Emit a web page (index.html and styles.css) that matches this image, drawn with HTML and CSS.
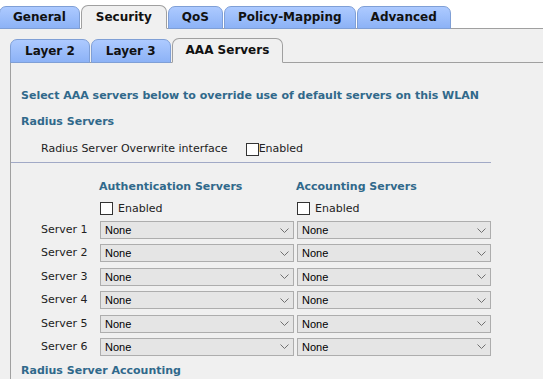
FILE: index.html
```html
<!DOCTYPE html>
<html lang="en">
<head>
  <meta charset="UTF-8">
  <title>WLAN - AAA Servers</title>
  <link rel="stylesheet" href="styles.css">
</head>
<body>
  <div class="tabbar">
    <div class="tab first">General</div>
    <div class="tab active">Security</div>
    <div class="tab">QoS</div>
    <div class="tab">Policy-Mapping</div>
    <div class="tab">Advanced</div>
  </div>
  <div class="main">
    <div class="subtabbar">
      <div class="subtab">Layer 2</div>
      <div class="subtab">Layer 3</div>
      <div class="subtab active">AAA Servers</div>
    </div>
    <div class="panel">
      <div class="intro">Select AAA servers below to override use of default servers on this WLAN</div>
      <div class="section">Radius Servers</div>
      <div class="overwrite">
        <span class="ow-label">Radius Server Overwrite interface</span>
        <input type="checkbox" class="check">
        <span>Enabled</span>
      </div>
      <div class="divider"></div>

      <div class="srv-row heads">
        <span></span>
        <span class="col-head">Authentication Servers</span>
        <span class="col-head">Accounting Servers</span>
      </div>
      <div class="srv-row checks">
        <span></span>
        <label><input type="checkbox" class="check"> Enabled</label>
        <label><input type="checkbox" class="check"> Enabled</label>
      </div>
      <div class="srv-row server">
        <span class="srv-label">Server 1</span>
        <select class="sel"><option>None</option></select>
        <select class="sel"><option>None</option></select>
      </div>
      <div class="srv-row server">
        <span class="srv-label">Server 2</span>
        <select class="sel"><option>None</option></select>
        <select class="sel"><option>None</option></select>
      </div>
      <div class="srv-row server">
        <span class="srv-label">Server 3</span>
        <select class="sel"><option>None</option></select>
        <select class="sel"><option>None</option></select>
      </div>
      <div class="srv-row server">
        <span class="srv-label">Server 4</span>
        <select class="sel"><option>None</option></select>
        <select class="sel"><option>None</option></select>
      </div>
      <div class="srv-row server">
        <span class="srv-label">Server 5</span>
        <select class="sel"><option>None</option></select>
        <select class="sel"><option>None</option></select>
      </div>
      <div class="srv-row server">
        <span class="srv-label">Server 6</span>
        <select class="sel"><option>None</option></select>
        <select class="sel"><option>None</option></select>
      </div>

      <div class="section accounting">Radius Server Accounting</div>
    </div>
  </div>
</body>
</html>
```
FILE: styles.css
```css
html, body {
  margin: 0;
  height: 100%;
}
body {
  font-family: "DejaVu Sans", Verdana, sans-serif;
  font-size: 11px;
  line-height: 14px;
  color: #222;
  background: #fff;
  display: flex;
  flex-direction: column;
  overflow: hidden;
}

/* top tabs */
.tabbar {
  display: flex;
  align-items: flex-end;
  height: 23px;
  padding-top: 5px;
  border-bottom: 1px solid #a0a0a0;
  background: #fff;
}
.tab {
  box-sizing: border-box;
  height: 23px;
  line-height: 21px;
  padding: 0 13px;
  margin-right: 1px;
  margin-bottom: -1px;
  font-size: 12px;
  font-weight: bold;
  color: #111;
  border: 1px solid #7f9fd6;
  border-radius: 7px 7px 0 0;
  background: linear-gradient(#adcaff, #8cb2f6);
}
.tab.first {
  margin-left: -1px;
}
.tab.active {
  height: 24px;
  line-height: 22px;
  padding: 0 14px;
  border-color: #a0a0a0;
  border-bottom-color: #f0f0f0;
  background: #f0f0f0;
}

.main {
  flex: 1;
  background: #f0f0f0;
  padding: 10px 0 0 10px;
  display: flex;
  flex-direction: column;
}

/* sub tabs */
.subtabbar {
  display: flex;
  align-items: flex-end;
  height: 23px;
  border-bottom: 1px solid #a0a0a0;
}
.subtab {
  box-sizing: border-box;
  height: 24px;
  line-height: 22px;
  padding: 0 14px;
  margin-right: 1px;
  margin-bottom: -1px;
  font-size: 12px;
  font-weight: bold;
  color: #111;
  border: 1px solid #7f9fd6;
  border-radius: 7px 7px 0 0;
  background: linear-gradient(#adcaff, #8cb2f6);
}
.subtab.active {
  height: 25px;
  line-height: 23px;
  padding: 0 13px;
  border-color: #a0a0a0;
  border-bottom-color: #f0f0f0;
  background: #f0f0f0;
}

.panel {
  flex: 1;
  border-left: 1px solid #a0a0a0;
  padding-left: 10px;
}
.intro, .section, .col-head {
  font-weight: bold;
  color: #30698b;
}
.intro {
  margin-top: 26px;
}
.section {
  margin-top: 12px;
}
.overwrite {
  display: flex;
  align-items: center;
  margin-top: 13px;
  padding-left: 20px;
}
.ow-label {
  margin-right: 18px;
}
.check {
  appearance: none;
  box-sizing: border-box;
  width: 13px;
  height: 13px;
  margin: 0;
  border: 1px solid #333;
  background: #fff;
  vertical-align: -2px;
}
.divider {
  width: 480px;
  margin: 6px 0 0 -10px;
  border-top: 1px solid #a1a9c6;
}

/* server grid */
.srv-row {
  display: grid;
  grid-template-columns: 76px 194px 194px;
  column-gap: 3px;
  align-items: center;
}
.heads {
  margin-top: 17px;
}
.col-head {
  margin-left: -1px;
}
.checks {
  margin-top: 8px;
}
.checks label {
  display: flex;
  align-items: center;
  gap: 5px;
}
.checks .check {
  margin-top: -2px;
}
.server {
  margin-top: 5.4px;
}
.checks + .server {
  margin-top: 5px;
}
.srv-label {
  padding-left: 20px;
}
.sel {
  appearance: none;
  box-sizing: border-box;
  width: 194px;
  height: 18px;
  margin: 0;
  padding: 0 0 0 4px;
  border: 1px solid #adadad;
  border-radius: 0;
  font-family: "Liberation Sans", Arial, sans-serif;
  font-size: 11px;
  color: #000;
  background: #e5e5e5 url("data:image/svg+xml,%3Csvg xmlns='http://www.w3.org/2000/svg' width='9' height='5'%3E%3Cpolyline points='0.5,0.5 4.5,4.5 8.5,0.5' fill='none' stroke='%23707070'/%3E%3C/svg%3E") no-repeat right 4px center;
}
.accounting {
  margin-top: 8px;
}
```
